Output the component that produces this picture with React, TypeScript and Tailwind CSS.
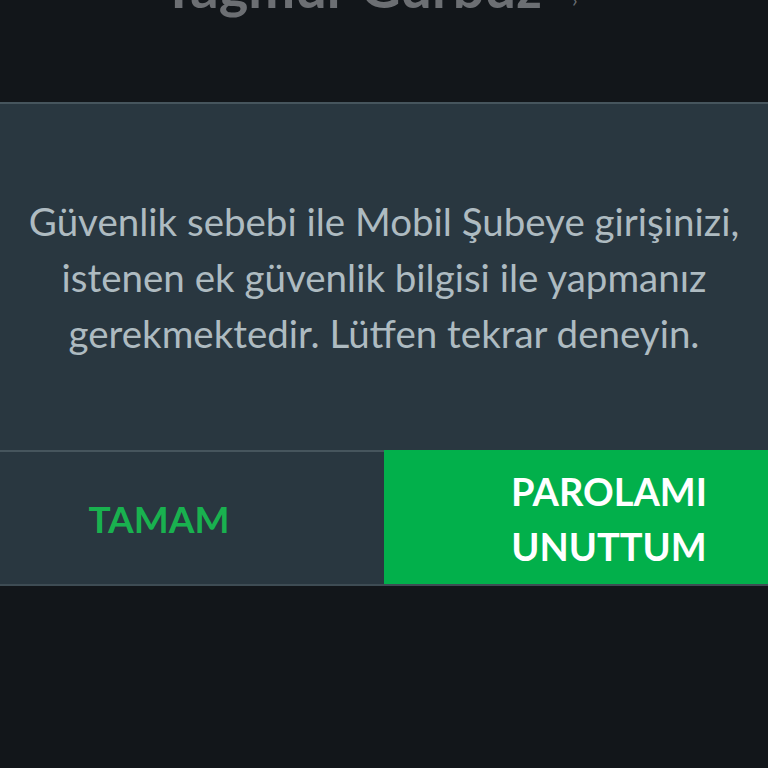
export default function App() {
  return (
    <div
      className="h-[768px] w-full overflow-hidden bg-[#12161a]"
      style={{ fontFamily: 'Lato, "Open Sans", sans-serif' }}
    >
      {/* header, mostly scrolled off-screen */}
      <div className="relative h-[102px]">
        <div className="absolute left-0 right-0 top-[-41px] flex justify-center">
          <span className="ml-[-30px] text-[56px] font-bold leading-none text-[#6c6f73]">Yağmur Gürbüz</span>
          <span className="ml-[30px] mt-[30px] text-[20px] leading-none text-[#6c6f73]">›</span>
        </div>
      </div>

      {/* dialog */}
      <div className="border-t-2 border-[#46555d] bg-[#293740]">
        <div className="flex h-[346px] items-center justify-center px-4">
          <p className="text-center text-[38.5px] leading-[56px] text-[#aebbc1]">
            Güvenlik sebebi ile Mobil Şubeye girişinizi,
            <br />
            istenen ek güvenlik bilgisi ile yapmanız
            <br />
            gerekmektedir. Lütfen tekrar deneyin.
          </p>
        </div>
        <div className="flex h-[136px] border-b-2 border-[#3e4c54]">
          <button className="flex flex-1 items-center justify-center border-t-2 border-[#46555d] bg-[#293740] pr-[66px] pt-[2px] text-[37px] font-bold text-[#19b14f]">
            TAMAM
          </button>
          <button className="flex flex-1 items-center justify-center bg-[#02b04b] pl-[66px] pt-[4px] text-[38px] font-bold leading-[55px] text-white">
            PAROLAMI
            <br />
            UNUTTUM
          </button>
        </div>
      </div>
    </div>
  );
}
